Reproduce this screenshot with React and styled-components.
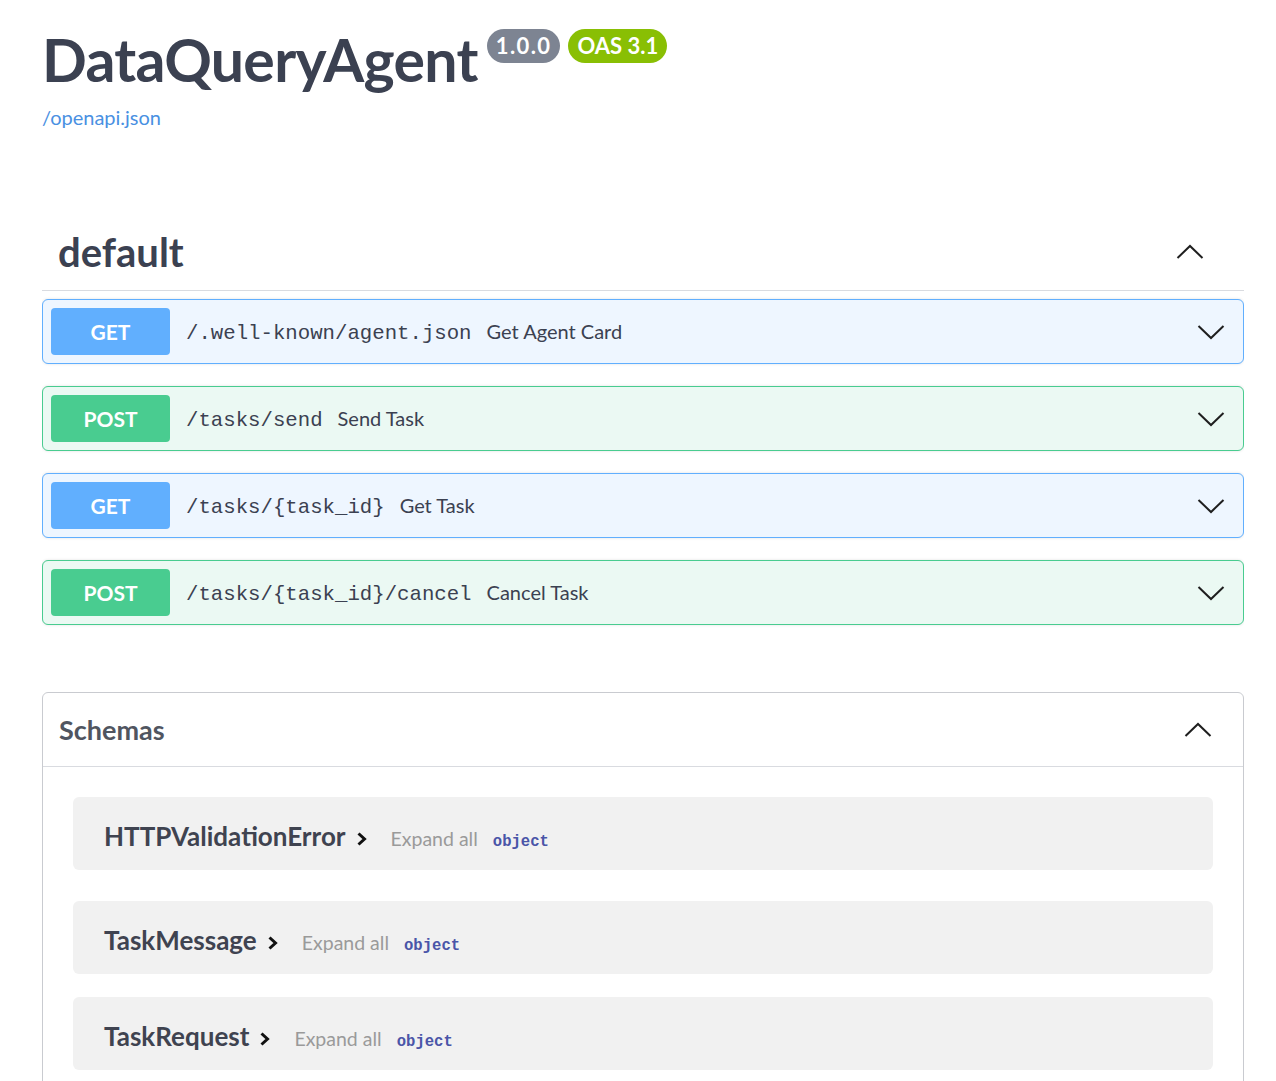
import React from 'react';
import styled, { createGlobalStyle } from 'styled-components';

const GlobalStyle = createGlobalStyle`
  html, body {
    margin: 0;
    padding: 0;
    background: #ffffff;
  }
  body {
    font-family: Lato, "Open Sans", sans-serif;
    color: #3b4151;
  }
`;

const operations = [
  { method: 'GET', path: '/.well-known/agent.json', summary: 'Get Agent Card' },
  { method: 'POST', path: '/tasks/send', summary: 'Send Task' },
  { method: 'GET', path: '/tasks/{task_id}', summary: 'Get Task' },
  { method: 'POST', path: '/tasks/{task_id}/cancel', summary: 'Cancel Task' },
];

const models = ['HTTPValidationError', 'TaskMessage', 'TaskRequest'];

const palette = {
  GET: { main: '#61affe', bg: '#eef6ff' },
  POST: { main: '#49cc90', bg: '#ebf9f3' },
};

function ChevronDown() {
  return (
    <svg width="28" height="16" viewBox="0 0 28 16">
      <polyline points="1.5,2 14,14 26.5,2" fill="none" stroke="#1f1f1f" strokeWidth="2" />
    </svg>
  );
}

function ChevronUp() {
  return (
    <svg width="28" height="16" viewBox="0 0 28 16">
      <polyline points="1.5,14 14,2 26.5,14" fill="none" stroke="#1f1f1f" strokeWidth="2" />
    </svg>
  );
}

function ChevronRight() {
  return (
    <ArrowIcon width="14" height="18" viewBox="0 0 14 18">
      <polyline points="3.5,3.5 9.5,9 3.5,14.5" fill="none" stroke="#111" strokeWidth="3" />
    </ArrowIcon>
  );
}

export default function App() {
  return (
    <>
      <GlobalStyle />
      <Page>
        <Info>
          <TitleRow>
            <Title>DataQueryAgent</Title>
            <Badge $color="#7d8492" $spacing={1.4}>1.0.0</Badge>
            <Badge $color="#89bf04" $spacing={0}>OAS 3.1</Badge>
          </TitleRow>
          <SpecLink>/openapi.json</SpecLink>
        </Info>

        <TagHeader>
          <TagName>default</TagName>
          <ChevronUp />
        </TagHeader>

        <OpList>
          {operations.map((op) => (
            <OpBlock key={op.path} $method={op.method}>
              <MethodBadge $method={op.method}>{op.method}</MethodBadge>
              <OpText>
                <OpPath>{op.path}</OpPath>
                <OpSummary>{op.summary}</OpSummary>
              </OpText>
              <ChevronDown />
            </OpBlock>
          ))}
        </OpList>

        <Schemas>
          <SchemasHeader>
            <SchemasTitle>Schemas</SchemasTitle>
            <ChevronUp />
          </SchemasHeader>
          <ModelList>
            {models.map((name, i) => (
              <ModelBox key={name} $extra={i === 0 ? 8 : 0}>
                <ModelLine>
                  <ModelName>{name}</ModelName>
                  <ChevronRight />
                  <ExpandAll>Expand all</ExpandAll>
                  <PropType>object</PropType>
                </ModelLine>
              </ModelBox>
            ))}
          </ModelList>
        </Schemas>
      </Page>
    </>
  );
}

const Page = styled.div`
  width: 1202px;
  margin-left: 42px;
  padding-top: 24px;
  height: 1057px;
  overflow: hidden;
`;

const Info = styled.div`
  display: flex;
  flex-direction: column;
`;

const TitleRow = styled.div`
  display: flex;
  align-items: flex-start;
  gap: 8px;
`;

const Title = styled.h1`
  margin: 0 1px 0 0;
  font-size: 59px;
  line-height: 72px;
  font-weight: 700;
  letter-spacing: -0.7px;
  color: #3b4151;
`;

const Badge = styled.span`
  margin-top: 5px;
  height: 34px;
  padding: 0 9px;
  border-radius: 17px;
  background: ${(p) => p.$color};
  color: #ffffff;
  font-size: 22px;
  font-weight: 700;
  line-height: 34px;
  letter-spacing: ${(p) => p.$spacing}px;
`;

const SpecLink = styled.a`
  margin-top: 8px;
  font-size: 20px;
  color: #4990e2;
  line-height: 26px;
  cursor: pointer;
`;

const TagHeader = styled.div`
  margin-top: 84px;
  height: 76px;
  padding: 0 40px 0 16px;
  display: flex;
  align-items: center;
  justify-content: space-between;
  border-bottom: 1px solid #d9dbe0;
`;

const TagName = styled.h3`
  margin: 0;
  font-size: 40px;
  font-weight: 700;
  color: #3b4151;
`;

const OpList = styled.div`
  margin-top: 8px;
  display: flex;
  flex-direction: column;
  gap: 22px;
`;

const OpBlock = styled.div`
  height: 63px;
  display: flex;
  align-items: center;
  padding: 0 18px 0 8px;
  border: 1px solid ${(p) => palette[p.$method].main};
  background: ${(p) => palette[p.$method].bg};
  border-radius: 6px;
  box-shadow: 0 0 3px rgba(0, 0, 0, 0.12);
`;

const MethodBadge = styled.span`
  width: 119px;
  height: 47px;
  border-radius: 4px;
  background: ${(p) => palette[p.$method].main};
  color: #ffffff;
  font-size: 21px;
  font-weight: 700;
  display: flex;
  align-items: center;
  justify-content: center;
`;

const OpText = styled.div`
  flex: 1;
  display: flex;
  align-items: baseline;
  margin-left: 16px;
`;

const OpPath = styled.span`
  font-family: "Liberation Mono", "DejaVu Sans Mono", monospace;
  font-size: 20.7px;
  color: #3b4151;
`;

const OpSummary = styled.span`
  margin-left: 15px;
  font-size: 20px;
  color: #3b4151;
`;

const Schemas = styled.section`
  margin-top: 67px;
  border: 1px solid #c9cbd0;
  border-radius: 6px;
  height: 480px;
`;

const SchemasHeader = styled.div`
  height: 73px;
  display: flex;
  align-items: center;
  justify-content: space-between;
  padding: 0 31px 0 16px;
  border-bottom: 1px solid #d9dbe0;
`;

const SchemasTitle = styled.h4`
  margin: 0;
  font-size: 27px;
  font-weight: 700;
  color: #505560;
`;

const ModelList = styled.div`
  padding: 30px 30px;
  display: flex;
  flex-direction: column;
  gap: 23px;
`;

const ModelBox = styled.div`
  height: 73px;
  margin-bottom: ${(p) => p.$extra}px;
  display: flex;
  align-items: center;
  padding: 4px 0 0 31px;
  box-sizing: border-box;
  background: #f1f1f1;
  border-radius: 6px;
`;

const ModelLine = styled.div`
  display: flex;
  align-items: baseline;
`;

const ModelName = styled.span`
  font-size: 26px;
  font-weight: 700;
  color: #3f4350;
  margin-right: 9px;
`;

const ArrowIcon = styled.svg`
  align-self: center;
  margin-top: 6px;
`;

const ExpandAll = styled.span`
  margin-left: 22px;
  font-size: 19.5px;
  color: #9a9a9a;
`;

const PropType = styled.span`
  margin-left: 15px;
  font-family: "Liberation Mono", "DejaVu Sans Mono", monospace;
  font-size: 15.6px;
  font-weight: 700;
  color: #4a55a8;
`;
